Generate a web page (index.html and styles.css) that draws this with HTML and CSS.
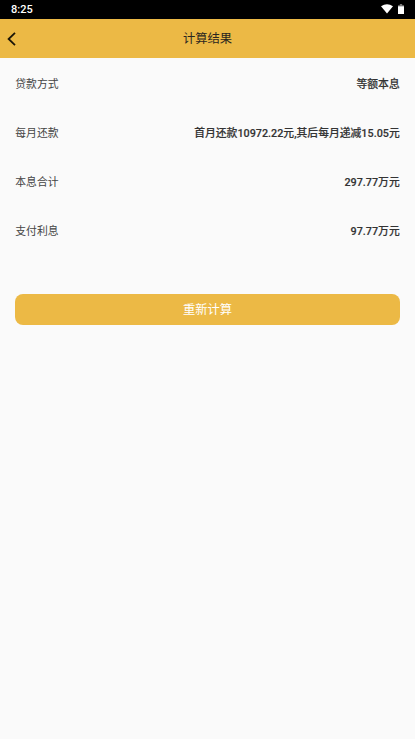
FILE: index.html
```html
<!DOCTYPE html>
<html lang="zh-CN">
<head>
<meta charset="utf-8">
<title>计算结果</title>
<link rel="stylesheet" href="styles.css">
</head>
<body>
<div class="status">
  <span class="time">8:25</span>
  <span class="icons">
    <svg class="wifi" viewBox="0 0 12 10"><path d="M0 2.3Q6-1.7 12 2.3L6 9.6Z"/></svg>
    <svg class="battery" viewBox="0 0 6 10"><path class="cap" d="M0 2.8V1.2H1.8V0H4.2V1.2H6V2.8Z"/><path d="M0 2.3H6V10H0Z"/></svg>
  </span>
</div>
<header class="bar">
  <svg class="back" viewBox="0 0 9 14"><path d="M8 .8L1.6 7L8 13.2"/></svg>
  <h1 class="title">计算结果</h1>
  <span class="back"></span>
</header>
<main class="content">
  <dl class="results">
    <div class="row"><dt>贷款方式</dt><dd>等额本息</dd></div>
    <div class="row"><dt>每月还款</dt><dd>首月还款10972.22元,其后每月递减15.05元</dd></div>
    <div class="row"><dt>本息合计</dt><dd>297.77万元</dd></div>
    <div class="row"><dt>支付利息</dt><dd>97.77万元</dd></div>
  </dl>
  <button class="again">重新计算</button>
</main>
</body>
</html>
```
FILE: styles.css
```css
* { box-sizing: border-box; }
body {
  margin: 0;
  min-height: 739px;
  background: #fafafa;
  color: #333;
  font-family: Roboto, "Noto Sans CJK SC", sans-serif;
}
.status {
  display: flex;
  justify-content: space-between;
  align-items: flex-start;
  height: 18.6px;
  padding: 0 11px;
  background: #000;
  color: #fff;
}
.time { font-size: 11px; font-weight: 500; line-height: 20px; }
.icons { display: flex; gap: 5px; padding-top: 3.6px; fill: #fff; }
.wifi { width: 12px; height: 10px; }
.battery { width: 6px; height: 10px; }
.cap { fill: #777; }
.bar {
  display: flex;
  justify-content: space-between;
  align-items: center;
  height: 39.2px;
  padding: 1px 7px 0;
  background: #ecb945;
}
.back { width: 9px; height: 14px; fill: none; stroke: #1c1608; stroke-width: 1.8; }
.title { margin: 0; font-size: 12.3px; font-weight: 400; line-height: 18px; color: #2b2620; }
.content { padding: 0.4px 15.3px 0; }
.results { margin: 0 0 39.2px; }
.row {
  display: flex;
  justify-content: space-between;
  align-items: center;
  height: 49.15px;
  font-size: 10.8px;
}
.row dt { color: #444; }
.row dd { margin: 0; font-weight: 500; -webkit-text-stroke: 0.15px #333; }
.again {
  display: block;
  width: 100%;
  height: 31px;
  padding: 0;
  border: 0;
  border-radius: 8px;
  background: #ecb945;
  color: #fff;
  font-family: inherit;
  font-size: 12.3px;
}
```
